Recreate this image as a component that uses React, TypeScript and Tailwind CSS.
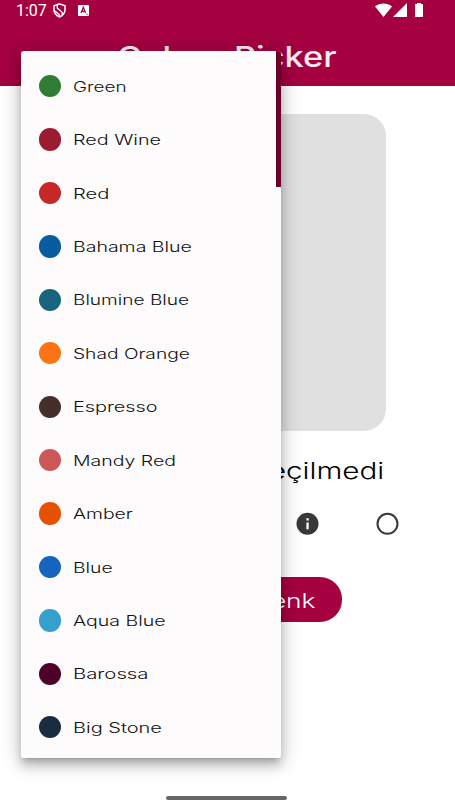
import { useLayoutEffect, useRef, useState } from 'react';

type WideProps = { text: string; width: number; className?: string };

// Extended lettering: the text is stretched horizontally to the given width.
function Wide({ text, width, className = '' }: WideProps) {
  const ref = useRef<HTMLSpanElement>(null);
  const [scale, setScale] = useState(1);
  useLayoutEffect(() => {
    if (ref.current) setScale(width / ref.current.offsetWidth);
  }, [text, width]);
  return (
    <span className={`inline-block shrink-0 whitespace-pre text-left ${className}`} style={{ width }}>
      <span ref={ref} className="inline-block origin-left" style={{ transform: `scaleX(${scale})` }}>
        {text}
      </span>
    </span>
  );
}

const colours = [
  { name: 'Green', width: 54, dot: 'bg-[#2e7d32]' },
  { name: 'Red Wine', width: 87.5, dot: 'bg-[#9b1b30]' },
  { name: 'Red', width: 36, dot: 'bg-[#c62828]' },
  { name: 'Bahama Blue', width: 118.5, dot: 'bg-[#095d9e]' },
  { name: 'Blumine Blue', width: 116, dot: 'bg-[#19647e]' },
  { name: 'Shad Orange', width: 116.5, dot: 'bg-[#fb7315]' },
  { name: 'Espresso', width: 85, dot: 'bg-[#452f2b]' },
  { name: 'Mandy Red', width: 103, dot: 'bg-[#cd5758]' },
  { name: 'Amber', width: 59.5, dot: 'bg-[#e65100]' },
  { name: 'Blue', width: 40, dot: 'bg-[#1565c0]' },
  { name: 'Aqua Blue', width: 92, dot: 'bg-[#35a0cb]' },
  { name: 'Barossa', width: 75.5, dot: 'bg-[#4e0029]' },
  { name: 'Big Stone', width: 88.5, dot: 'bg-[#1a2c42]' },
];

function StatusBar() {
  return (
    <div className="flex h-[22px] items-start text-white">
      <span className="ml-4 mt-px w-[31px] font-[Roboto] text-[16px] leading-[19px]">1:07</span>
      <svg className="ml-[6px] mt-[3px] h-[15px] w-[13px]" viewBox="0 0 13 15" fill="none" stroke="currentColor" strokeWidth="1.5">
        <path d="M6.500.9 12 2.700v4.100c0 3.300-2.300 5.800-5.500 7.200C3.300 12.600 1 10.100 1 6.800V2.700Z" />
        <path d="M4.200 2.200v2.900l5 4.200v2.500M1.300 7.500l4.900 4.100v2" strokeWidth="1.300" />
      </svg>
      <svg className="ml-[12px] mt-[5px] h-[11px] w-[11px]" viewBox="0 0 11 11">
        <rect width="11" height="11" rx="1" fill="currentColor" />
        <path d="m3 8 2.300-5.600L7.600 8M3.900 6.300h2.800M8.500 9.300h1" fill="none" stroke="#a50040" strokeWidth="1.300" />
      </svg>
      <svg className="ml-auto mt-[3px] h-[14px] w-[17px]" viewBox="0 0 17 14" fill="currentColor">
        <path d="M0 3.600C4.800-.7 12.200-.7 17 3.600L8.500 14Z" />
      </svg>
      <svg className="ml-[1px] mt-[3px] h-[14px] w-[14px]" viewBox="0 0 14 14" fill="currentColor">
        <path d="M14 0v14H0Z" />
      </svg>
      <svg className="ml-[8px] mr-[32px] mt-[3px] h-[14px] w-2" viewBox="0 0 8 14" fill="currentColor">
        <path d="M2 0h4v1h2v13H0V1h2Z" />
      </svg>
    </div>
  );
}

function ColourMenu() {
  return (
    <div className="absolute left-[21px] top-[51px] h-[707px] w-[260px] overflow-hidden rounded-[3px] bg-[#fdfbfc]">
      <ul className="pt-[8.500px]">
        {colours.map((c) => (
          <li key={c.name} className="flex h-[53.430px] items-center pl-[18px]">
            <span className={`h-[22.300px] w-[22.300px] shrink-0 rounded-full ${c.dot}`} />
            <Wide text={c.name} width={c.width} className="ml-[11.700px] pt-px text-[14px] font-light leading-5 text-[#111]" />
          </li>
        ))}
      </ul>
      <div className="absolute right-0 top-0 h-[136px] w-[5px] bg-[#6b002b]" />
    </div>
  );
}

export default function App() {
  return (
    <div className="relative flex h-[811px] w-[455px] flex-col overflow-hidden bg-white font-['Inter','Noto_Sans',sans-serif] text-[#111]">
      <header className="h-[86px] bg-[#a50040]">
        <StatusBar />
        <h1 className="flex justify-center pr-[2px] pt-[16px] text-[29px] font-medium leading-[38px] text-[#f7edf1]">
          <Wide text="Colour " width={117} />
          <Wide text="Picker" width={102} />
        </h1>
      </header>

      <main className="flex flex-col items-center">
        <div className="mt-7 h-[317px] w-[317px] rounded-[22px] bg-[#e0e0e0]" />
        <div className="mt-[24px] flex text-[23px] font-light leading-8 text-black">
          <Wide text="Renk S" width={194} />
          <Wide text="e" width={21} />
          <Wide text="çilmedi" width={98} />
        </div>
        <div className="mt-[24px] flex -translate-x-[0.500px] gap-[56px]">
          {[0, 1, 2].map((n) => (
            <span key={n} className="mt-[2px] h-[22px] w-6" />
          ))}
          <svg className="h-[26px] w-6" viewBox="0 0 24 26">
            <circle cx="12" cy="12.800" r="11" fill="#383838" />
            <path d="M10.900 7.300h2.300v2.200h-2.300ZM10.900 11.600h2.300v6.600h-2.300Z" fill="white" />
          </svg>
          <svg className="h-[26px] w-6" viewBox="0 0 24 26">
            <circle cx="12" cy="12.800" r="10" fill="none" stroke="#383838" strokeWidth="2" />
          </svg>
        </div>
        <button className="mt-[40px] flex h-[45px] w-[229px] items-center justify-center rounded-[22px] bg-[#a50040] pr-[2px] pt-[2px] text-[20px] font-light leading-7 text-white">
          <Wide text="Rastgele Re" width={147} />
          <Wide text="nk" width={29} />
        </button>
      </main>

      <div className="mb-[11px] ml-[166px] mt-auto h-[4px] w-[121px] rounded-full bg-[#666]" />
      <div className="absolute left-[21px] top-[51px] h-[707px] w-[260px] rounded-[3px] shadow-[0_5px_5px_-3px_rgba(0,0,0,0.2),0_8px_10px_1px_rgba(0,0,0,0.14),0_3px_20px_2px_rgba(0,0,0,0.2)]" />
      <ColourMenu />
    </div>
  );
}
